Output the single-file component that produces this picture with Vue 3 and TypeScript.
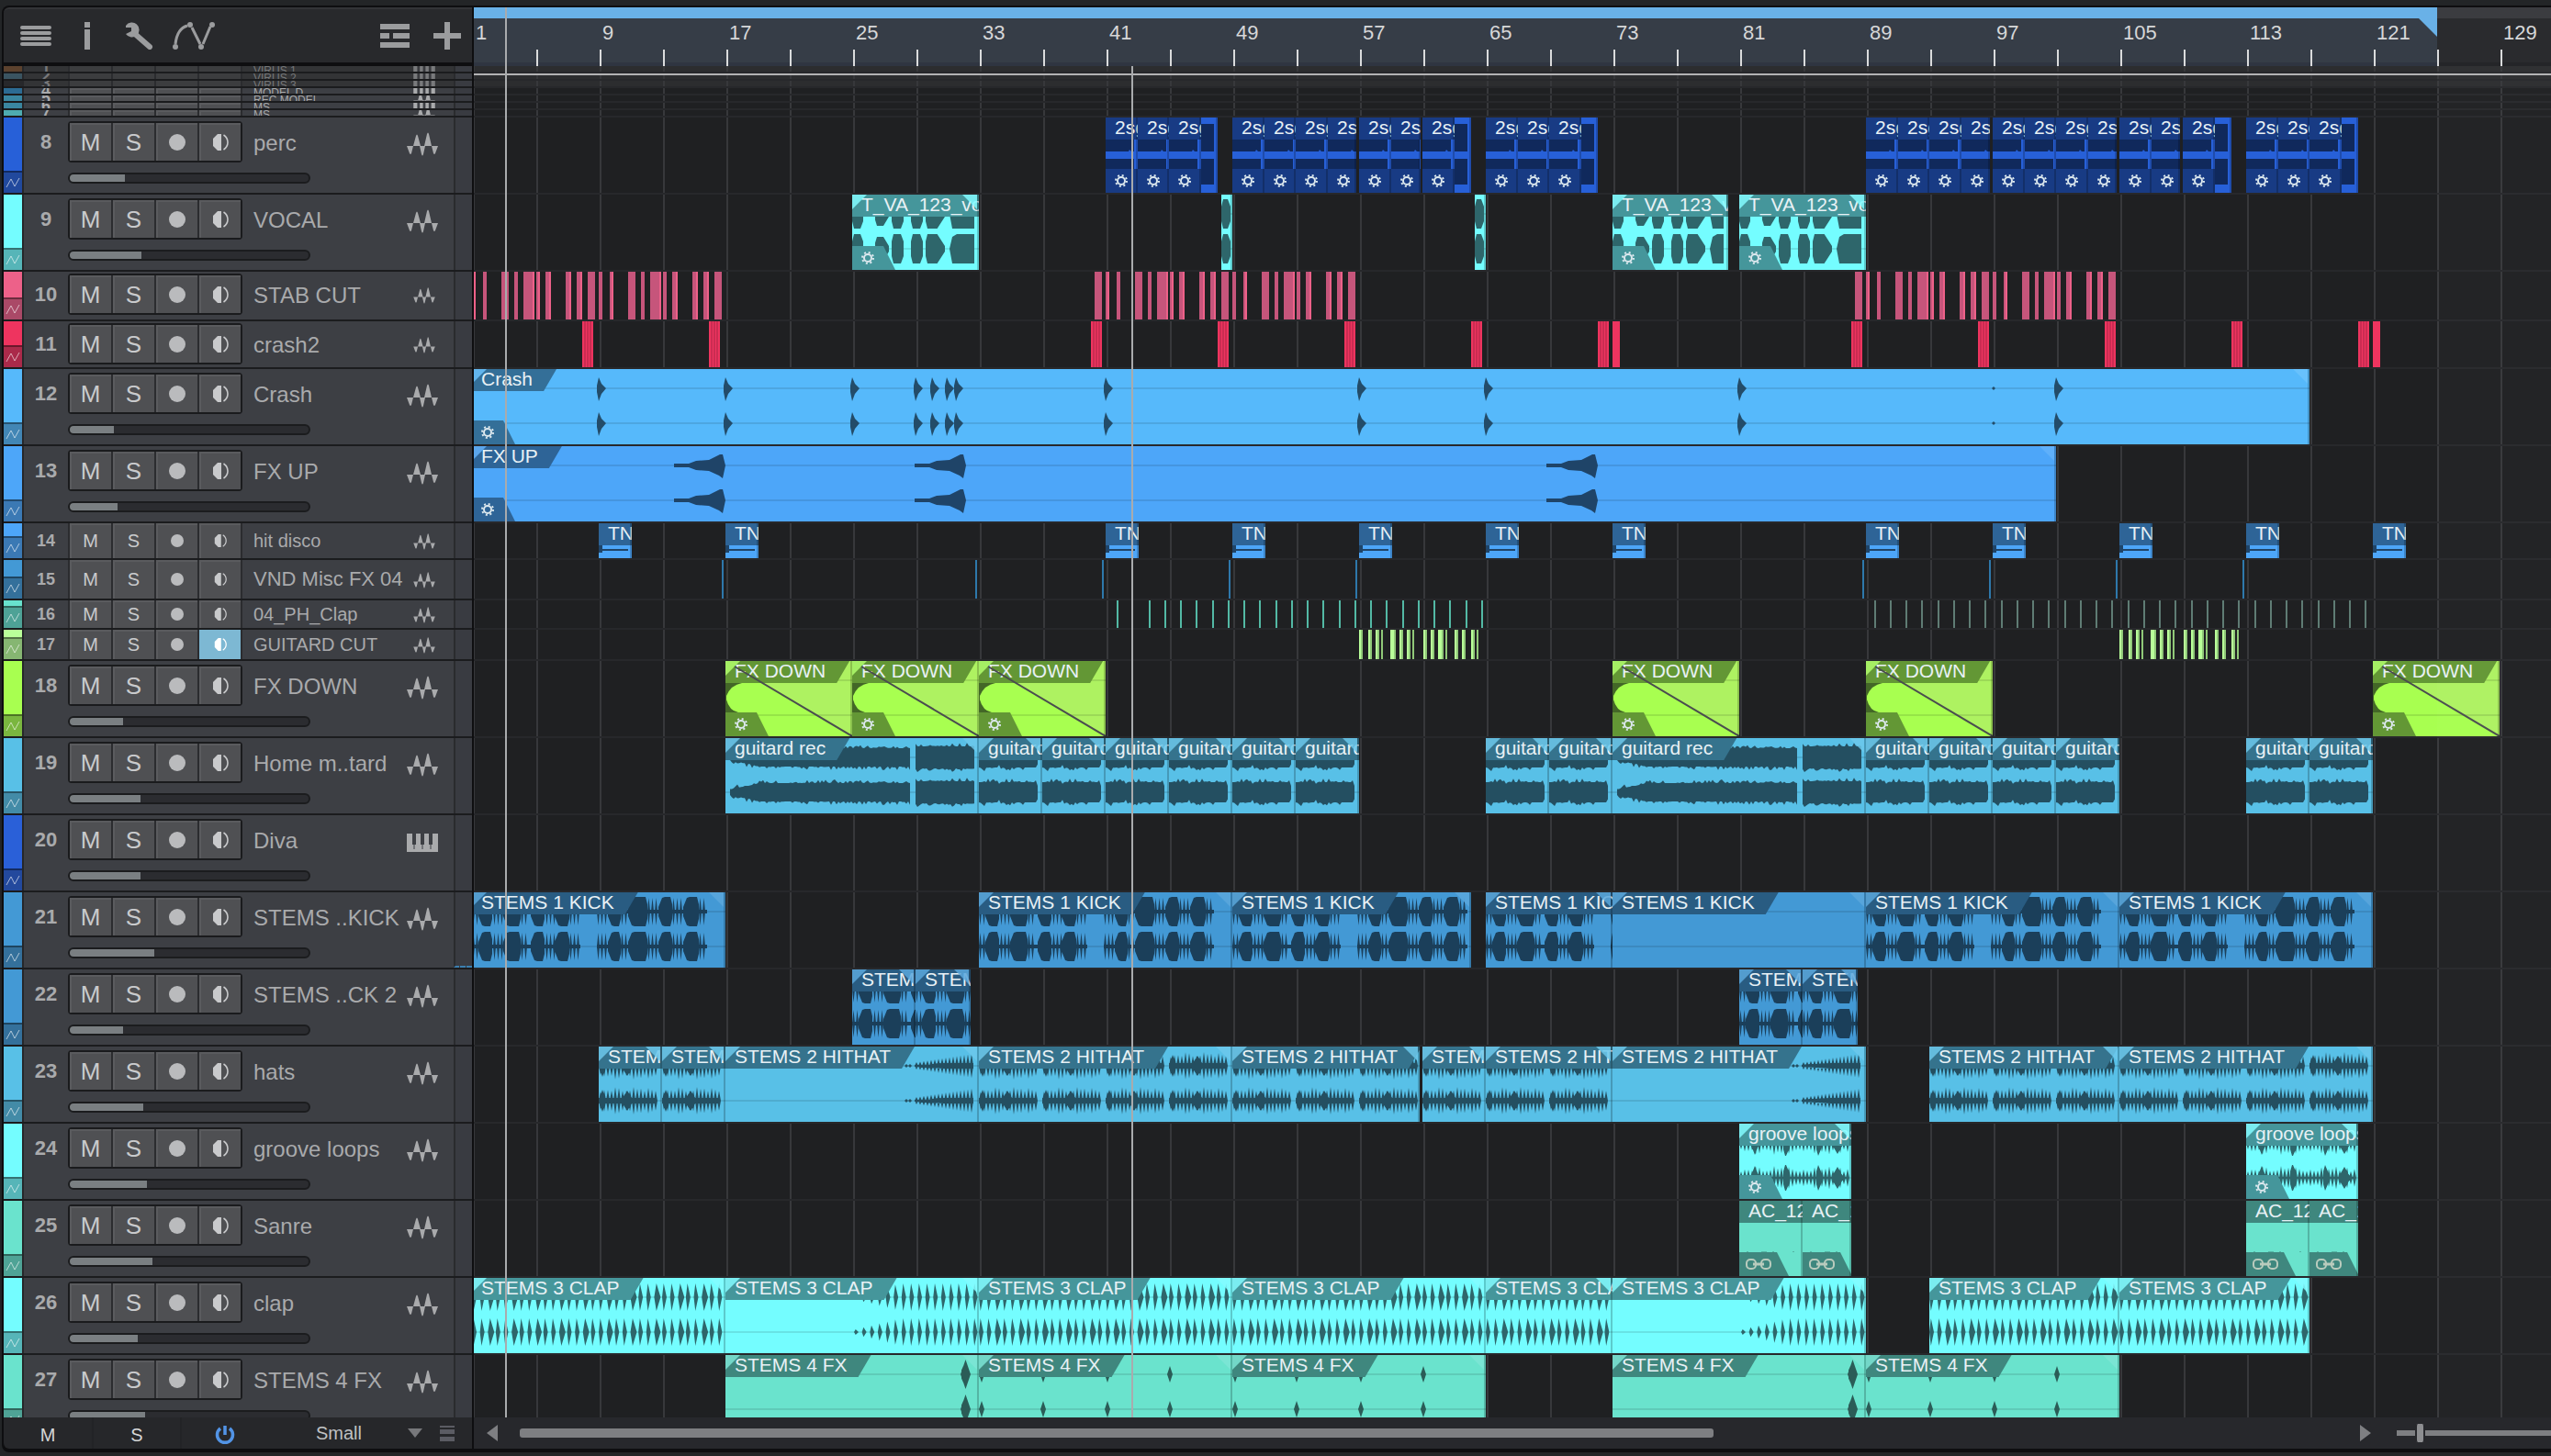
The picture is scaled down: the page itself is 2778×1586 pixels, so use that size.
<script setup lang="ts">
type Wave = 'none' | 'perc' | 'percTail' | 'vocal' | 'vocalBit' | 'crash' | 'riser' | 'hit' | 'down' | 'guitarLong' | 'guitar' | 'kick' | 'hat' | 'hatBuild' | 'groove' | 'clap' | 'clapBuild' | 'fxIn' | 'fx' | 'notes'
type Size = 'mini' | 'small' | 'mid' | 'large'

interface Clip { from: number; to: number; label?: string; wave: Wave; fadeIn?: boolean; fadeOut?: boolean; tab?: 'gear' | 'link'; full?: boolean }
interface Slice { x: number; w: number; edge?: boolean }
interface Track {
  id: number; name: string; color: string; size: Size; height: number
  volume?: number; icon?: 'wave' | 'keys'; dim?: boolean; monitor?: boolean
  clips?: Clip[]; slices?: Slice[]; sliceColor?: string; edgeColor?: string
}

const BAR = 17.25
const ORIGIN = -2
const px = (bar: number) => ORIGIN + Math.round((bar - 1) * BAR)

const rulerBars = Array.from({ length: 30 }, (_, i) => 1 + i * 8)

const stereo = (label: string, wave: Wave, ranges: number[][], opts: Partial<Clip> = {}): Clip[] =>
  ranges.map(([from, to]) => ({ from, to, label, wave, fadeIn: true, fadeOut: true, ...opts }))

/* perc loops: two-bar copies, some runs closed by an unlabelled tail */
const percRun = (from: number, count: number, end: number, tail: boolean): Clip[] => {
  const out: Clip[] = []
  for (let i = 0; i < count; i++) {
    const start = from + i * 2
    out.push({ from: start, to: !tail && i === count - 1 ? end : start + 2, label: '2sg', wave: 'perc', tab: 'gear', full: true })
  }
  if (tail) out.push({ from: from + count * 2, to: end, wave: 'percTail' })
  return out
}

const stabPattern: [number, number][] = [
  [-12, 8], [0, 4], [12, 4], [32, 8], [46, 4], [56, 12], [70, 4], [80, 6], [102, 6], [114, 6], [126, 8], [138, 4],
  [150, 4], [170, 8], [184, 4], [194, 12], [208, 4], [218, 6], [240, 6], [252, 6], [264, 8],
]
const stabs: Slice[] = [1, 41, 89].flatMap(b => stabPattern.map(([x, w]) => ({ x: px(b) + x, w, edge: w === 6 || w === 12 || (w === 4 && x % 10 === 0) })))
const crashes: Slice[] = [
  ...[118, 256, 672, 810, 948, 1086, 1224, 1500, 1638, 1776, 1914, 2052].map(x => ({ x, w: 12 })),
  { x: 1240, w: 8 }, { x: 2068, w: 8 },
]
const cutPattern: [number, number][] = [[0, 4], [10, 4], [18, 4], [24, 2], [34, 6], [44, 4], [52, 4], [58, 2], [70, 4], [78, 4], [86, 6], [94, 2], [104, 4], [112, 4], [122, 4], [128, 2]]
const cuts: Slice[] = [57, 105].flatMap(b => cutPattern.map(([x, w]) => ({ x: px(b) + x, w, edge: true })))
const clapsA: Slice[] = [41.7, ...Array.from({ length: 22 }, (_, i) => 43.7 + i)].map(b => ({ x: px(b), w: 2 }))
const clapsB: Slice[] = Array.from({ length: 32 }, (_, i) => ({ x: px(89.5 + i), w: 2 }))

const tracks: Track[] = [
  { id: 1, name: 'VIRUS 1', color: '#5c422e', size: 'mini', height: 6, icon: 'keys', dim: true },
  { id: 2, name: 'VIRUS 2', color: '#3a5461', size: 'mini', height: 6, icon: 'keys', dim: true },
  { id: 3, name: 'VIRUS 3', color: '#27282b', size: 'mini', height: 6, icon: 'keys', dim: true },
  { id: 4, name: 'MODEL D', color: '#2c6b93', size: 'mini', height: 6, icon: 'keys' },
  { id: 5, name: 'REC MODEL', color: '#3a86a0', size: 'mini', height: 6 },
  { id: 6, name: 'MS', color: '#3a86a0', size: 'mini', height: 6, icon: 'keys' },
  { id: 7, name: 'MS', color: '#4eacb0', size: 'mini', height: 6 },
  {
    id: 8, name: 'perc', color: '#2760d8', size: 'large', height: 82, volume: 60,
    clips: [
      ...percRun(41, 3, 48.05, true), ...percRun(49, 4, 56.8, false), ...percRun(57, 2, 60.9, false), ...percRun(61, 1, 64.05, true),
      ...percRun(65, 3, 72.05, true), ...percRun(89, 4, 96.8, false), ...percRun(97, 4, 104.8, false), ...percRun(105, 2, 108.8, false),
      ...percRun(109, 1, 112.05, true), ...percRun(113, 3, 120.05, true),
    ],
  },
  {
    id: 9, name: 'VOCAL', color: '#74fdff', size: 'large', height: 82, volume: 78,
    clips: [
      ...stereo('T_VA_123_vocal', 'vocal', [[25, 33], [73, 80.3], [81, 89]], { tab: 'gear' }),
      { from: 48.3, to: 49, wave: 'vocalBit' }, { from: 64.3, to: 65, wave: 'vocalBit' },
    ],
  },
  { id: 10, name: 'STAB CUT', color: '#ed6189', size: 'mid', height: 52, slices: stabs, sliceColor: '#c6557b', edgeColor: '#ed6189' },
  { id: 11, name: 'crash2', color: '#ee345f', size: 'mid', height: 50, slices: crashes, sliceColor: '#ee345f' },
  { id: 12, name: 'Crash', color: '#56b9fb', size: 'large', height: 82, volume: 48, clips: stereo('Crash', 'crash', [[1, 117]], { tab: 'gear' }) },
  { id: 13, name: 'FX UP', color: '#4da6f9', size: 'large', height: 82, volume: 52, clips: stereo('FX UP', 'riser', [[1, 101]], { tab: 'gear' }) },
  {
    id: 14, name: 'hit disco', color: '#4da6f9', size: 'small', height: 38,
    clips: [9, 17, 41, 49, 57, 65, 73, 89, 97, 105, 113, 121].map(b => ({ from: b, to: b + 2.1, label: 'TNT', wave: 'hit' as Wave })),
  },
  {
    id: 15, name: 'VND Misc FX 04', color: '#4399d5', size: 'small', height: 42, sliceColor: '#2e78ab',
    slices: [17, 33, 41, 49, 57, 89, 97, 105, 113].map(b => ({ x: px(b - 0.25), w: 2 })),
  },
  { id: 16, name: '04_PH_Clap', color: '#68e2cd', size: 'small', height: 30, slices: [...clapsA, ...clapsB], sliceColor: '#53b9a5' },
  { id: 17, name: 'GUITARD CUT', color: '#b9ff99', size: 'small', height: 32, monitor: true, slices: cuts, sliceColor: '#b9ff99', edgeColor: '#90c878' },
  {
    id: 18, name: 'FX DOWN', color: '#a8ff50', size: 'large', height: 82, volume: 58,
    clips: stereo('FX DOWN', 'down', [[17, 25], [25, 33], [33, 41], [73, 81], [89, 97], [121, 129]], { tab: 'gear', fadeOut: false }),
  },
  {
    id: 19, name: 'Home m..tard', color: '#58c0e7', size: 'large', height: 82, volume: 77,
    clips: [
      ...stereo('guitard rec', 'guitarLong', [[17, 33], [73, 89]]),
      ...stereo('guitard rec', 'guitar', [33, 37, 41, 45, 49, 53, 65, 69, 89, 93, 97, 101, 113, 117].map(b => [b, b + 4])),
    ],
  },
  { id: 20, name: 'Diva', color: '#2a60d8', size: 'large', height: 82, volume: 77, icon: 'keys' },
  {
    id: 21, name: 'STEMS ..KICK', color: '#4399d5', size: 'large', height: 82, volume: 92,
    clips: [
      ...stereo('STEMS 1 KICK', 'kick', [[1, 17], [33, 49], [49, 64.05], [65, 73], [89, 105], [105, 121]]),
      ...stereo('STEMS 1 KICK', 'none', [[73, 89]]),
    ],
  },
  {
    id: 22, name: 'STEMS ..CK 2', color: '#4399d5', size: 'large', height: 82, volume: 58,
    clips: stereo('STEMS 1 KICK', 'kick', [[25, 29], [29, 32.5], [81, 85], [85, 88.5]]),
  },
  {
    id: 23, name: 'hats', color: '#58c0e7', size: 'large', height: 82, volume: 80,
    clips: [
      ...stereo('STEMS 2 HITHAT', 'hat', [[9, 13], [13, 17], [33, 49], [49, 60.8], [61, 65], [65, 73], [93, 105], [105, 121]]),
      ...stereo('STEMS 2 HITHAT', 'hatBuild', [[17, 33], [73, 89]]),
    ],
  },
  { id: 24, name: 'groove loops', color: '#74fdff', size: 'large', height: 82, volume: 84, clips: stereo('groove loops', 'groove', [[81, 88.05], [113, 120.05]], { tab: 'gear' }) },
  {
    id: 25, name: 'Sanre', color: '#6ae3cd', size: 'large', height: 82, volume: 90,
    clips: stereo('AC_123_loop', 'notes', [[81, 85], [85, 88.05], [113, 117], [117, 120.05]], { tab: 'link', fadeIn: false, fadeOut: false }),
  },
  {
    id: 26, name: 'clap', color: '#74fdff', size: 'large', height: 82, volume: 74,
    clips: [
      ...stereo('STEMS 3 CLAP', 'clap', [[1, 17], [33, 49], [49, 65], [65, 73], [93, 105], [105, 117]]),
      ...stereo('STEMS 3 CLAP', 'clapBuild', [[17, 33], [73, 89]]),
    ],
  },
  {
    id: 27, name: 'STEMS 4 FX', color: '#6ae3cd', size: 'large', height: 82, volume: 82,
    clips: [
      ...stereo('STEMS 4 FX', 'fxIn', [[17, 33], [73, 89]]),
      ...stereo('STEMS 4 FX', 'fx', [[33, 49], [49, 65], [89, 105]]),
    ],
  },
]

/* ---- waveform outlines, drawn round a zero line ---- */
const noise = (n: number) => { const v = Math.sin(n * 12.9898) * 43758.5453; return v - Math.floor(v) }
const spike = (x: number, w: number, a: number) => `M${x} 0L${x + w * 0.35} ${-a}L${x + w} 0L${x + w * 0.35} ${a}Z`
const strike = (x: number, a: number) => `M${x} -3L${x + 2} ${-a}L${x + 5} -5L${x + 10} 0L${x + 5} 6L${x + 2} ${a + 2}L${x} 4Z`
const dart = (x: number, w: number, a: number) => `M${x} 0L${x + w / 2} ${-a}L${x + w} 0L${x + w / 2} ${a}Z`
const blob = (a0: number, a1: number, a: number) =>
  `M${a0} ${-a * 0.5}L${a0 + 2} ${-a}H${a1 - 3}L${a1} ${-a * 0.5}V${a * 0.5}L${a1 - 3} ${a}H${a0 + 2}L${a0} ${a * 0.5}Z`
/* fast attack, long tapering tail */
const swell = (x0: number, x1: number, a: number) => {
  const m = x0 + (x1 - x0) * 0.6
  return `M${x0} ${-a * 0.5}L${x0 + 2} ${-a}H${m}L${x1} -3V3L${m} ${a}H${x0 + 2}L${x0} ${a * 0.5}Z`
}
const thump = (x0: number, x1: number, a: number) =>
  `M${x0} -5L${x0 + 4} ${1 - a}L${x0 + 7} ${-a}H${x1 - 2}L${x1} -8V8L${x1 - 2} ${a}H${x0 + 7}L${x0 + 4} ${a - 1}L${x0} 5Z`
const body = (x0: number, x1: number, amp: (x: number) => number) => {
  const top: string[] = []
  const bottom: string[] = []
  for (let x = x0; x <= x1; x += 2) {
    top.push(`${x} ${-(amp(x) + noise(x) ** 3 * 4).toFixed(1)}`)
    bottom.unshift(`${x} ${(amp(x) + noise(x + 7) ** 3 * 4).toFixed(1)}`)
  }
  return `M${top.join('L')}L${bottom.join('L')}Z`
}

const kickBlobs = [[7, 22], [34, 53], [64, 79], [90, 106], [148, 162], [170, 191], [203, 218], [230, 247]]
const kickRuns = [[0, 8], [23, 36], [53, 62], [80, 92], [106, 118], [136, 150], [162, 172], [191, 202], [218, 232], [247, 257]]

function outline(wave: Wave, w: number): string {
  let d = ''
  switch (wave) {
    case 'vocal':
      for (const [a, b] of [[0, 12], [43, 56], [64, 77]]) d += blob(a, b, 16)
      d += swell(25, 40, 13) + swell(80, 101, 16)
      return d + `M106 0L109 -13L114 -16H${w - 5}V16H109Z`
    case 'vocalBit': return blob(0, 10, 16)
    case 'crash': {
      for (const b of [9, 17, 25, 41, 57, 65, 81, 101]) d += strike((b - 1) * BAR - 2, 12)
      for (const x of [481, 499, 515, 525]) d += strike(x, 12)
      return d + dart(1655, 4, 2)
    }
    case 'riser':
      for (const x of [220, 482, 1170]) d += `M${x} -2H${x + 16}L${x + 24} -5L${x + 38} -6L${x + 50} -12L${x + 53} -12L${x + 56} 0L${x + 53} 14L${x + 49} 11L${x + 38} 6L${x + 24} 5L${x + 16} 2H${x}Z`
      return d
    case 'guitarLong': return body(5, 202, x => Math.min(10, 2 + x / 5)) + body(207, 271, () => 12)
    case 'guitar': return body(0, 65, x => (x > 62 ? 7 : x > 20 && x < 24 ? 8 : 11))
    case 'kick':
      for (const [a, b] of kickBlobs) d += thump(a, b, 16)
      for (const [a, b] of kickRuns) for (let x = a; x < b - 2; x += 4) d += dart(x, 3, 15)
      return d + 'M0 -2H118V2H0ZM136 -2H256V2H136Z'
    case 'hat':
      for (let g = 0; g < w; g += 69) {
        for (let x = g; x < g + 62; x += 4) d += dart(x, 4, 10 + noise(x - g) * 5)
        d += `M${g} -3H${g + 63}V3H${g}Z` + dart(g + 24, 14, 11) + dart(g, 8, 12)
      }
      return d
    case 'hatBuild':
      d += dart(195, 4, 2) + dart(199, 4, 2)
      for (let x = 206; x < w - 6; x += 4) d += dart(x, 4, 4 + (x - 206) / 6.5)
      return d + 'M206 -1L238 -3H270V3H238L206 1Z'
    case 'groove':
      for (let x = 0; x < w - 5; x += 4) d += dart(x, 4, 7 + noise(x) * 6)
      return d + `M0 -1H${w - 5}V1H0Z` + dart(12, 10, 13) + blob(48, 54, 14) + blob(84, 89, 14) + dart(100, 14, 12)
    case 'clap':
      for (let x = 0; x < w - 4; x += 8.625) d += spike(x, Math.round(x / 8.625) % 3 === 2 ? 7 : 5, 15)
      return d
    case 'clapBuild':
      for (let x = 140; x < w - 4; x += 8.625) d += spike(x, 5, Math.min(15, 3 + (x - 140) / 4))
      return d
    case 'fxIn': return dart(256, 11, 16) + blob(257, 265, 9)
    case 'fx': return [0, 67, 137, 205].map(x => dart(x, 6, 9)).join('')
    default: return ''
  }
}

const clipPx = (c: Clip) => {
  const left = px(c.from)
  return { left, width: px(c.to) - left }
}
const clipStyle = (c: Clip) => {
  const { left, width } = clipPx(c)
  return { left: `${left}px`, width: `${width}px` }
}
const isStereo = (c: Clip) => !['perc', 'percTail', 'hit', 'down', 'notes'].includes(c.wave)
const wavePath = (c: Clip) => outline(c.wave, clipPx(c).width)
const sliceFill = (t: Track, s: Slice) => (t.id === 16 && s.x > 1400 ? '#5f7c74' : t.sliceColor)
</script>

<template>
  <main class="app">
    <div class="frame">
      <header class="toolbar">
        <div class="tools">
          <button aria-label="Track list"><svg width="34" height="30"><path d="M2 6H32M2 12H32M2 18H32M2 24H32" stroke="#9b9c9e" stroke-width="4" stroke-linecap="round" /></svg></button>
          <button aria-label="Inspector"><svg width="14" height="30"><path d="M4 0H10V6H4ZM4 8H10V30H4Z" fill="#9b9c9e" /></svg></button>
          <div class="pair">
            <button aria-label="Tools"><svg width="34" height="30"><path d="M13 13L29 27" stroke="#9b9c9e" stroke-width="6" stroke-linecap="round" /><path d="M3 6H9V10L3 13A8 8 0 1 0 3 4Z" fill="#9b9c9e" /></svg></button>
            <button aria-label="Automation">
              <svg width="46" height="30" fill="none" stroke="#9b9c9e" stroke-width="3"><path d="M3 24Q5 7 16 4M21 6L30 24M33 24L41 5" /><g fill="#9b9c9e" stroke="none"><circle cx="3" cy="27" r="3" /><circle cx="19" cy="3" r="3" /><circle cx="31" cy="27" r="3" /><circle cx="43" cy="3" r="3" /></g></svg>
            </button>
          </div>
        </div>
        <div class="tools right">
          <button aria-label="Track presets"><svg width="32" height="30"><path d="M0 2H32V8H0ZM0 12H10V18H0ZM14 12H32V18H14ZM0 22H32V28H0Z" fill="#9b9c9e" /></svg></button>
          <button aria-label="Add track"><svg width="30" height="30"><path d="M12 0H18V12H30V18H18V30H12V18H0V12H12Z" fill="#9b9c9e" /></svg></button>
        </div>
      </header>

      <section class="heads" aria-label="Tracks">
        <article v-for="t in tracks" :key="t.id" class="head" :class="[t.size, { dim: t.dim, roomy: t.height > 40 }]" :style="{ height: `${t.height}px`, '--c': t.color }">
          <div class="strip">
            <span class="swatch"></span>
            <span v-if="t.size !== 'mini'" class="auto"><svg width="16" height="12"><path d="M1 11L6 2L10 10L15 1" fill="none" stroke="#fff" stroke-opacity="0.6" stroke-width="1" /></svg></span>
          </div>
          <div class="main">
            <div class="line">
              <span class="num">{{ t.id }}</span>
              <div class="cells">
                <button :aria-label="`Mute ${t.name}`"><template v-if="t.size !== 'mini'">M</template></button>
                <button :aria-label="`Solo ${t.name}`"><template v-if="t.size !== 'mini'">S</template></button>
                <button :aria-label="`Record ${t.name}`"><span v-if="t.size !== 'mini'" class="dot"></span></button>
                <button :aria-label="`Monitor ${t.name}`" :class="{ on: t.monitor }">
                  <svg v-if="t.size !== 'mini'" class="mon" viewBox="0 0 18 20"><path d="M10 1V19H6L1 14V6L6 1Z" fill="currentColor" /><path d="M12.5 2Q17 5 17 10T12.5 18" fill="none" stroke="currentColor" stroke-width="1.6" /></svg>
                </button>
              </div>
              <span class="name">{{ t.name }}</span>
              <svg v-if="t.icon === 'keys'" class="kind" viewBox="0 0 34 26"><path d="M0 4H34V24H0Z" fill="#a9aaac" /><path d="M6 4H10V16H6ZM15 4H19V16H15ZM24 4H28V16H24Z" fill="#3d3f44" /><path d="M8 16V21M17 16V21M26 16V21" stroke="#3d3f44" stroke-width="1" /></svg>
              <svg v-else class="kind" viewBox="0 0 34 26">
                <path d="M0 15H7L5 23Q4 25 3 23ZM7 15L10 4Q11 1 12 4L15 15ZM14 15H20L18 24Q17 27 16 24ZM19 15L22 2Q23 -1 24 2L27 15ZM27 15H34L31 23Q30 25 29 23Z" fill="#a9aaac" />
              </svg>
            </div>
            <input v-if="t.volume" class="fader" type="range" min="0" max="260" :value="t.volume" :aria-label="`Volume ${t.name}`" :style="{ '--v': `${t.volume}px` }">
          </div>
          <div class="meter" :class="{ dashed: t.id === 21 }"></div>
        </article>
      </section>

      <footer class="foot">
        <button>M</button>
        <button>S</button>
        <button aria-label="Power"><svg width="22" height="22"><path d="M6 4A8.500 8.500 0 1 0 16 4M11 1V11" fill="none" stroke="#5294e6" stroke-width="3.500" /></svg></button>
        <label class="size">
          <select aria-label="Track height"><option>Small</option><option>Medium</option><option>Large</option></select>
          <svg width="16" height="10"><path d="M0 0H16L8 10Z" fill="#77787b" /></svg>
        </label>
        <button class="rows" aria-label="Track sizes"><svg width="16" height="17"><path d="M0 0H16V2H0ZM0 4H16V9H0ZM0 12H16V17H0Z" fill="#5b5c63" /></svg></button>
      </footer>

      <section class="timeline" aria-label="Arrangement">
        <div class="ruler">
          <div class="ruler-end"></div>
          <svg class="flag" width="20" height="20"><path d="M0 0H20V20Z" fill="#69b1e7" /></svg>
          <span v-for="b in rulerBars" :key="b" class="bar" :style="{ left: `${px(b)}px` }">{{ b }}</span>
          <div class="ticks"></div>
        </div>
        <div class="lanes">
          <div v-for="t in tracks" :key="t.id" class="lane" :class="{ dim: t.dim }" :style="{ height: `${t.height}px`, '--c': t.color }">
            <svg v-if="t.slices" class="slices" width="100%" height="100%">
              <g v-for="(s, i) in t.slices" :key="i">
                <rect :x="s.x" y="0" :width="s.w" height="100%" :fill="sliceFill(t, s)" />
                <rect v-if="s.edge" :x="s.x + s.w - 2" y="0" width="2" height="100%" :fill="t.edgeColor" />
                <template v-if="t.id === 11 && s.w > 8">
                  <rect v-for="k in [2, 5, 8]" :key="k" :x="s.x + k" y="0" width="2" height="100%" fill="#cb2c52" />
                </template>
              </g>
            </svg>
            <div v-for="(c, i) in t.clips" :key="i" class="clip" :style="clipStyle(c)">
              <svg class="wave" width="100%" height="100%">
                <template v-if="isStereo(c)">
                  <rect y="20" width="100%" height="2" class="mid-line" /><rect y="58" width="100%" height="2" class="mid-line" />
                  <path :d="wavePath(c)" transform="translate(0 21)" /><path :d="wavePath(c)" transform="translate(0 59)" />
                </template>
                <path v-else-if="c.wave === 'perc'" d="M0 24H31V37H28L26 35L25 37H0ZM0 45H31V56H0Z" />
                <path v-else-if="c.wave === 'percTail'" d="M0 7H14V37H0ZM0 45H14V73H0Z" />
                <path v-else-if="c.wave === 'hit'" d="M0 24H4V28H32V30H4V32H0Z" />
                <template v-else-if="c.wave === 'down'">
                  <path d="M10 5L138 82V0H10Z" class="over" />
                  <rect y="20" width="100%" height="2" class="mid-line" /><rect y="58" width="100%" height="2" class="mid-line" />
                  <path d="M0 24H18Q6 26 1 38V42Q4 54 14 56H0Z" />
                </template>
                <path v-else-if="c.wave === 'notes'" d="M8 55H10V56H8ZM24 55H30V56H24ZM36 55H38V56H36ZM58 55H60V56H58Z" class="soft" />
              </svg>
              <span v-if="c.label" class="label" :class="{ full: c.full }">{{ c.label }}</span>
              <i v-if="c.fadeIn" class="fade in"></i>
              <i v-if="c.fadeOut" class="fade out"></i>
              <span v-if="c.tab" class="tab" :class="[c.tab, { full: c.full }]">
                <svg v-if="c.tab === 'gear'" width="14" height="14" fill="none" stroke="#dce8ee"><circle cx="7" cy="7" r="4" stroke-width="2" /><circle cx="7" cy="7" r="6" stroke-width="2" stroke-dasharray="2 2.710" /></svg>
                <svg v-else width="28" height="12" fill="none" stroke="#b9cbbd" stroke-width="2"><rect x="1" y="1" width="10" height="10" rx="4" /><rect x="17" y="1" width="10" height="10" rx="4" /><path d="M8 6H20" stroke-width="3" /></svg>
              </span>
              <svg v-if="c.wave === 'down'" class="wave"><path d="M10 6L138 82" class="curve" /></svg>
            </div>
          </div>
          <div class="beyond"></div>
          <div class="cursor-row"></div>
        </div>
        <div class="playhead song"></div>
        <div class="playhead edit"></div>
      </section>

      <div class="scroll">
        <button aria-label="Scroll left"><svg width="12" height="18"><path d="M12 0V18L0 9Z" fill="#7e7f82" /></svg></button>
        <div class="track"><div class="thumb"></div></div>
        <button aria-label="Scroll right"><svg width="12" height="18"><path d="M0 0V18L12 9Z" fill="#7e7f82" /></svg></button>
        <input class="zoom" type="range" min="0" max="100" value="13" aria-label="Zoom">
      </div>
    </div>
  </main>
</template>

<style>
html, body { margin: 0; background: #232527; }
</style>

<style scoped>
.app { box-sizing: border-box; height: 100vh; padding: 8px 0 6px 4px; background: #232527; overflow: hidden; font-family: "Liberation Sans", Arial, sans-serif; color: #a9aaac; }
.frame { box-sizing: border-box; height: 100%; display: grid; grid-template-columns: 510px minmax(0, 1fr); grid-template-rows: 64px minmax(0, 1fr) 34px; column-gap: 2px; background: #0e0e10; border-bottom: 2px solid #0e0e10; box-shadow: 0 0 0 2px #0e0e10; border-radius: 6px 0 0 6px; }
button { margin: 0; padding: 0; border: 0; background: none; color: inherit; font-family: inherit; display: flex; align-items: center; justify-content: center; }
svg { display: block; }

.toolbar { grid-column: 1; grid-row: 1; box-sizing: border-box; height: 60px; display: flex; justify-content: space-between; align-items: center; padding: 0 12px 0 18px; background: #28292c; border-top: 2px solid #333437; border-radius: 6px 0 0 0; }
.tools { display: flex; align-items: center; gap: 32px; }
.tools.right { gap: 26px; }
.pair { display: flex; gap: 20px; }

.heads { grid-column: 1; grid-row: 2; overflow: hidden; background: #1b1c1e; }
.head { display: flex; overflow: hidden; margin-bottom: 2px; background: #3d3f44; }
.strip { width: 20px; flex: none; display: flex; flex-direction: column; gap: 2px; margin-right: 2px; box-shadow: 2px 0 0 #26272a; background: color-mix(in srgb, var(--c) 45%, black); }
.swatch { flex: 1; background: var(--c); }
.auto { height: 22px; display: flex; align-items: center; justify-content: center; background: color-mix(in srgb, var(--c) 69%, #14151a); }
.main { flex: 1; min-width: 0; display: flex; flex-direction: column; }
.line { display: flex; align-items: center; height: 100%; }
.num { width: 48px; text-align: center; font-weight: 700; font-size: 22px; line-height: 24px; }
.cells { box-sizing: border-box; width: 190px; height: 100%; display: grid; grid-template-columns: repeat(4, 1fr); gap: 2px; padding: 0 2px; background: #2b2c2f; border: 0 solid #1a1b1d; }
.cells button { background: #4f5053; box-shadow: inset 2px 2px 0 #5a5b5e; color: #c9cacc; font-size: 26px; line-height: 28px; }
.cells button.on { background: #7db8d3; box-shadow: none; color: #fff; }
.dot { width: 18px; height: 18px; border-radius: 50%; background: #babbbd; }
.mon { width: 18px; height: 20px; }
.name { flex: 1; min-width: 0; margin-left: 12px; padding-top: 2px; white-space: nowrap; font-size: 24px; line-height: 28px; }
.kind { flex: none; width: 34px; height: 26px; margin: 4px 17px 0 0; }
.meter { flex: none; box-sizing: border-box; width: 20px; border-left: 2px solid #2a2b2e; background: #393b41; }
.meter.dashed { border-bottom: 2px dashed #3b7fb0; }

.large .main { padding-top: 4px; }
.large .line, .mid .line { height: 45px; flex: none; }
.mid .main { padding-top: 2px; }
.large .cells, .mid .cells { border-width: 2px; padding: 0; border-radius: 4px; }
.mid .kind, .small .kind, .mini .kind { width: 24px; height: 18px; margin: 2px 20px 0 0; }

.small .num { font-size: 18px; }
.small .name { font-size: 20px; padding: 0; }
.small .cells button { font-size: 20px; }
.small .dot { width: 14px; height: 14px; }
.small .mon { width: 14px; height: 16px; }
.small.roomy .name { font-size: 22px; }

.mini .num { font-size: 18px; }
.mini .name { font-size: 12px; line-height: 10px; padding: 0; align-self: flex-start; }
.head.dim { background: #333436; color: #77787a; }
.dim .cells button { background: #3c3d3f; box-shadow: none; }
.dim .kind { opacity: 0.6; }

.fader { appearance: none; box-sizing: border-box; width: 264px; height: 12px; margin: 11px 0 0 48px; border: 2px solid #1b1c1e; border-radius: 6px; background: linear-gradient(to right, #7a7f82 var(--v), #2b2c30 var(--v)); }
.fader::-webkit-slider-thumb { appearance: none; width: 1px; height: 1px; background: transparent; }

.foot { grid-column: 1; grid-row: 3; display: flex; align-items: stretch; background: #26272a; border-radius: 0 0 0 6px; color: #d4d5d7; }
.foot button { width: 96px; font-size: 20px; line-height: 24px; padding-top: 4px; }
.foot button + button { border-left: 2px solid #222326; }
.size { flex: 1; display: flex; align-items: center; justify-content: space-between; padding-left: 52px; }
.size select { appearance: none; width: 90px; padding: 0; border: 0; background: transparent; color: #bfc0c2; font-family: inherit; font-size: 20px; line-height: 24px; }
.foot .rows { width: 54px; padding: 0; border: 0; }

.timeline { grid-column: 2; grid-row: 1 / 3; position: relative; display: flex; flex-direction: column; overflow: hidden; }
.ruler { flex: none; position: relative; height: 64px; overflow: hidden; background: linear-gradient(#69b1e7 12px, #363d47 12px 60px, #2f3541 60px); }
.ruler-end { position: absolute; left: 2138px; right: 0; top: 0; bottom: 0; background: linear-gradient(#3b3c40 12px, #2a2b2e 12px 60px, #242528 60px); }
.flag { position: absolute; left: 2118px; top: 12px; }
.bar { position: absolute; top: 12px; padding-left: 4px; font-size: 22px; line-height: 32px; color: #d6d7d8; }
.ticks { position: absolute; left: 68px; right: 0; bottom: 0; height: 18px; background: repeating-linear-gradient(to right, #dadbdc 0 2px, transparent 2px 69px); }
.lanes { flex: 1; min-height: 0; position: relative; overflow: hidden; background: #27282b; }
.lane { position: relative; margin-bottom: 2px; }
.lane::before { content: ""; position: absolute; inset: 0 0 0 -1px; background: repeating-linear-gradient(to right, #37383b 0 2px, #1f2022 2px 69px); }
.lane.dim::before { background: repeating-linear-gradient(to right, #37383b 0 2px, #2c2d2f 2px 69px); }
.slices { position: absolute; inset: 0; }
.clip { position: absolute; top: 0; bottom: 0; overflow: hidden; background: var(--c); }
.clip::after { content: ""; position: absolute; top: 0; bottom: 0; right: 0; width: 2px; background: #0003; }
.wave { position: absolute; left: 0; top: 0; width: 100%; height: 100%; fill: color-mix(in srgb, var(--c) 39%, #02060c); }
.mid-line { fill: #0000001a; }
.over { fill: #c8c8a03a; }
.soft { fill: #00000033; }
.curve { stroke: #4a4d4f; stroke-width: 2; fill: none; }
.label { position: absolute; left: 0; top: 0; height: 24px; padding: 0 26px 0 10px; white-space: nowrap; font-size: 21px; line-height: 22px; color: #e8f1f5; background: color-mix(in srgb, var(--c) 58%, #040810); clip-path: polygon(0 0, 100% 0, calc(100% - 14px) 100%, 0 100%); }
.label.full { right: 0; padding-right: 0; clip-path: none; overflow: hidden; }
.fade { position: absolute; top: 0; width: 16px; height: 16px; background: color-mix(in srgb, var(--c) 84%, #d8f0ff); opacity: 0.85; }
.fade.in { left: 0; clip-path: polygon(0 0, 100% 0, 0 100%); }
.fade.out { right: 2px; clip-path: polygon(0 0, 100% 0, 100% 100%); }
.tab { position: absolute; left: 0; bottom: 0; height: 26px; display: flex; align-items: center; padding: 0 23px 0 10px; background: color-mix(in srgb, var(--c) 58%, #040810); clip-path: polygon(0 0, calc(100% - 13px) 0, 100% 100%, 0 100%); }
.tab.link { padding: 0 19px 0 7px; }
.tab.full { right: 0; padding-right: 0; clip-path: none; }
.beyond { position: absolute; left: 2138px; right: 0; top: 0; bottom: 0; background: #ffffff05; }
.cursor-row { position: absolute; left: 0; right: 0; top: 8px; height: 2px; background: #b3b3b4; }
.playhead { position: absolute; width: 2px; background: #a9abad; bottom: 0; }
.song { left: 34px; top: 0; }
.edit { left: 716px; top: 64px; }

.scroll { grid-column: 2; grid-row: 3; display: flex; align-items: center; padding-left: 14px; background: #27282c; }
.track { flex: 1; margin: 0 4px 0 24px; }
.thumb { width: 65%; height: 10px; border-radius: 3px; background: #7e7f82; }
.zoom { appearance: none; flex: none; width: 168px; height: 20px; margin: 0 0 0 28px; background: linear-gradient(#7e7f82, #7e7f82) 0 50% / 100% 6px no-repeat; border-radius: 3px 0 0 3px; }
.zoom::-webkit-slider-thumb { appearance: none; width: 11px; height: 20px; background: #8d8e91; border: solid #27282c; border-width: 0 2px; border-radius: 3px; }
</style>
